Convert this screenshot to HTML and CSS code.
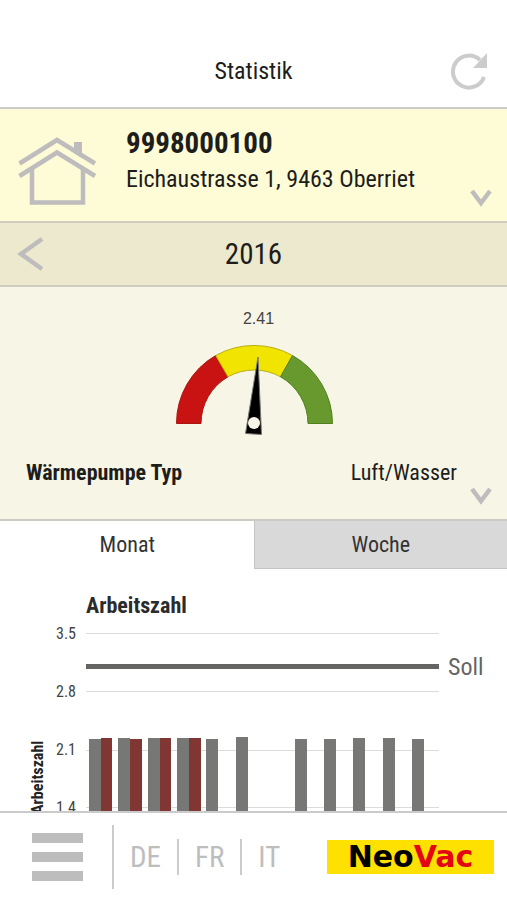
FILE: index.html
```html
<!DOCTYPE html>
<html lang="de">
<head>
    <meta charset="UTF-8">
    <meta name="viewport" content="width=device-width, initial-scale=1.0">
    <title>Statistik</title>
    <link rel="stylesheet" href="styles.css">
</head>
<body>
    <header class="topbar">
        <h1>Statistik</h1>
        <button class="icon-btn refresh" type="button" aria-label="Aktualisieren">
            <svg width="38" height="40" viewBox="0 0 38 40">
                <path d="M29 9A16 16 0 1 0 33 26" fill="none" stroke="#ccc" stroke-width="4"/>
                <path d="M36 2v15H22z" fill="#ccc"/>
            </svg>
        </button>
    </header>

    <main class="content">
        <section class="account">
            <svg class="house" width="80" height="70" viewBox="0 0 80 70" fill="none" stroke="#bebcbc" stroke-width="4.500">
                <path d="M1.500 27.500L39 4l38 23.500"/>
                <path d="M1.500 40L39 16.500L77 40"/>
                <path d="M14 33v33.500h51V33"/>
                <path d="M56 6h8v16l-8-5z" fill="#bebcbc" stroke="none"/>
            </svg>
            <div class="account-text">
                <h2>9998000100</h2>
                <p>Eichaustrasse 1, 9463 Oberriet</p>
            </div>
            <button class="icon-btn expand" type="button" aria-label="Adresse wählen">
                <svg width="24" height="20" viewBox="0 0 24 20"><path d="M3 3l9 12 9-12" fill="none" stroke="#bebcbc" stroke-width="4.500"/></svg>
            </button>
        </section>

        <section class="year">
            <button class="icon-btn" type="button" aria-label="Vorheriges Jahr">
                <svg width="28" height="36" viewBox="0 0 28 36"><path d="M25 3L4 18l21 15" fill="none" stroke="#bebcbc" stroke-width="4.500"/></svg>
            </button>
            <span class="year-value">2016</span>
        </section>

        <section class="pump">
            <p class="gauge-value">2.41</p>
            <svg class="gauge" width="160" height="94" viewBox="-1 0 160 94">
                <path d="M1.500 80.500A78.500 78.500 0 0 1 40.700 12.500L53 33.800A54 54 0 0 0 26 80.500z" fill="#c91313" stroke="#a91410"/>
                <path d="M40.700 12.500A78.500 78.500 0 0 1 117.500 12.500L105.500 33.800A54 54 0 0 0 53 33.800z" fill="#f1e500" stroke="#b8ae10"/>
                <path d="M117.500 12.500A78.500 78.500 0 0 1 157.500 80.500H133A54 54 0 0 0 105.500 33.800z" fill="#67992e" stroke="#4f8020"/>
                <path d="M83 14L86.500 91.500L70.500 90.500z" fill="#000" stroke="#777"/>
                <circle cx="79" cy="80" r="6" fill="#f7f5e5"/>
            </svg>
            <div class="pump-type">
                <strong>Wärmepumpe Typ</strong>
                <span>Luft/Wasser</span>
            </div>
            <button class="icon-btn expand" type="button" aria-label="Details anzeigen">
                <svg width="24" height="20" viewBox="0 0 24 20"><path d="M3 3l9 12 9-12" fill="none" stroke="#bebcbc" stroke-width="4.500"/></svg>
            </button>
        </section>

        <nav class="tabs">
            <button class="tab active" type="button">Monat</button>
            <button class="tab" type="button">Woche</button>
        </nav>

        <section class="chart">
            <svg viewBox="0 0 507 300">
                <text class="chart-title" x="86" y="44">Arbeitszahl</text>
                <g class="grid">
                    <path d="M86 64.500h353M86 122.500h353M86 181.500h353M86 238.500h353"/>
                </g>
                <g class="tick">
                    <text x="76" y="70">3.5</text>
                    <text x="76" y="128">2.8</text>
                    <text x="76" y="186">2.1</text>
                    <text x="76" y="244">1.4</text>
                </g>
                <text class="axis-title" transform="translate(43 245) rotate(-90)">Arbeitszahl</text>
                <g class="bars">
                    <path d="M89 170h12v130h-12z"/>
                    <path d="M118 169h12v131h-12z"/>
                    <path d="M148 169h12v131h-12z"/>
                    <path d="M177 169h12v131h-12z"/>
                    <path d="M206 170h12v130h-12z"/>
                    <path d="M236 168h12v132h-12z"/>
                    <path d="M295 170h12v130h-12z"/>
                    <path d="M324 170h12v130h-12z"/>
                    <path d="M353 169h12v131h-12z"/>
                    <path d="M383 169h12v131h-12z"/>
                    <path d="M412 170h12v130h-12z"/>
                </g>
                <g class="bars-prev">
                    <path d="M101 169h11v131h-11z"/>
                    <path d="M130 170h12v130h-12z"/>
                    <path d="M160 169h11v131h-11z"/>
                    <path d="M189 169h12v131h-12z"/>
                </g>
                <path class="target" d="M86 97.500h353"/>
                <text class="target-label" x="448" y="106">Soll</text>
            </svg>
        </section>
    </main>

    <footer class="bottombar">
        <button class="menu-btn" type="button" aria-label="Menü">
            <span></span>
            <span></span>
            <span></span>
        </button>
        <nav class="languages">
            <a href="#">DE</a>
            <a href="#">FR</a>
            <a href="#">IT</a>
        </nav>
        <a class="logo" href="#">Neo<span>Vac</span></a>
    </footer>
</body>
</html>
```

FILE: styles.css
```css
* {
    box-sizing: border-box;
}
body {
    margin: 0;
    height: 100vh;
    display: flex;
    flex-direction: column;
    background-color: #fff;
    color: #1d1d1b;
    font-family: "Liberation Sans Narrow", "Arial Narrow", "Roboto Condensed", Roboto, sans-serif;
    font-size: 22px;
}
h1, h2, p {
    margin: 0;
}
button {
    font: inherit;
    color: inherit;
    border: none;
    background: none;
    padding: 0;
    cursor: pointer;
}
.icon-btn svg {
    display: block;
}
.topbar {
    position: relative;
    height: 109px;
    padding-top: 34px;
    display: flex;
    align-items: center;
    justify-content: center;
    border-bottom: 2px solid #cbcbcb;
}
.topbar h1 {
    font-size: 24px;
    font-weight: normal;
}
.refresh {
    position: absolute;
    right: 18px;
    bottom: 16px;
}
.content {
    flex: 1;
    min-height: 0;
    overflow-y: auto;
    scrollbar-width: none;
}
.account {
    position: relative;
    height: 114px;
    padding: 17px 18px;
    display: flex;
    gap: 28px;
    background-color: #fefbd7;
    border-bottom: 2px solid #cfccbe;
}
.house {
    margin-top: 10px;
}
.account h2 {
    font-size: 29px;
    line-height: 34px;
}
.account p {
    font-size: 24px;
    line-height: 38px;
}
.expand {
    position: absolute;
    right: 14px;
    bottom: 13px;
}
.year {
    height: 64px;
    padding: 0 17px;
    display: grid;
    grid-template-columns: 28px 1fr 28px;
    align-items: center;
    background-color: #ede9ce;
    border-bottom: 2px solid #cfccbe;
}
.year-value {
    font-size: 29px;
    text-align: center;
}
.pump {
    position: relative;
    height: 234px;
    padding-top: 22px;
    background-color: #f7f5e5;
    border-bottom: 2px solid #c9cbc4;
}
.gauge-value {
    padding-left: 10px;
    font-family: "Liberation Sans", Arial, sans-serif;
    font-size: 16px;
    line-height: 20px;
    text-align: center;
    color: #444;
}
.gauge {
    display: block;
    margin: 14px auto 0;
}
.pump-type {
    padding: 21px 50px 0 26px;
    display: flex;
    justify-content: space-between;
    line-height: 30px;
}
.tabs {
    display: flex;
}
.tab {
    flex: 1;
    height: 48px;
    background-color: #d9d9d9;
    border-left: 1px solid #c4c4c4;
    border-bottom: 1px solid #c4c4c4;
    color: #333;
}
.tab.active {
    background-color: #fff;
    border-color: transparent;
}
.chart svg {
    display: block;
    width: 100%;
}
.chart-title {
    font-size: 22px;
    font-weight: bold;
    fill: #2b2b2b;
}
.grid {
    stroke: #dcdcdc;
}
.tick {
    font-size: 16px;
    text-anchor: end;
    fill: #444;
}
.axis-title {
    font-size: 16px;
    font-weight: bold;
    fill: #222;
}
.bars {
    fill: #777775;
}
.bars-prev {
    fill: #803733;
}
.target {
    stroke: #646462;
    stroke-width: 5;
}
.target-label {
    font-size: 24px;
    fill: #646462;
}
.bottombar {
    height: 89px;
    padding: 0 13px 0 32px;
    display: flex;
    align-items: center;
    border-top: 2px solid #cbcbcb;
    background-color: #fff;
}
.menu-btn {
    display: flex;
    flex-direction: column;
    gap: 9px;
}
.menu-btn span {
    width: 51px;
    height: 10px;
    background-color: #bdbdbd;
}
.languages {
    margin-left: 29px;
    height: 64px;
    display: flex;
    align-items: center;
    border-left: 2px solid #ccc;
}
.languages a {
    padding: 0 16px;
    font-size: 29px;
    line-height: 36px;
    color: #bdbdbd;
    text-decoration: none;
}
.languages a + a {
    border-left: 2px solid #ccc;
}
.logo {
    margin-left: auto;
    width: 167px;
    height: 34px;
    font-family: "DejaVu Sans", Verdana, sans-serif;
    font-size: 30px;
    font-weight: bold;
    line-height: 34px;
    text-align: center;
    text-decoration: none;
    color: #000;
    background-color: #ffe100;
}
.logo span {
    color: #e30613;
}
```
